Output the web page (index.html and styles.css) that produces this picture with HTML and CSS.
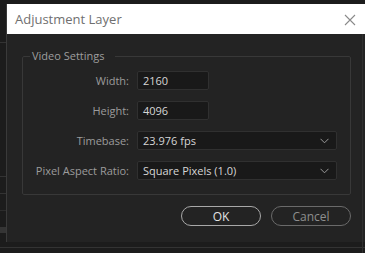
FILE: index.html
```html
<!DOCTYPE html>
<html>
  <head>
    <title>Adjustment Layer</title>
    <link rel="stylesheet" href="styles.css">
  </head>
  <body>
    <div class="screen">
      <div class="side">
        <div class="seg seg-a"></div>
        <div class="seg seg-b"></div>
        <div class="seg seg-c"></div>
        <div class="seg seg-d"></div>
        <div class="seg seg-e"></div>
      </div>

      <div class="dialog">
        <div class="titlebar">
          <span class="title">Adjustment Layer</span>
          <svg class="close" width="12" height="12" viewBox="0 0 12 12">
            <path d="M1 1 L11 11 M11 1 L1 11" stroke="#8a8a8a" stroke-width="1.1" fill="none"/>
          </svg>
        </div>

        <div class="body">
          <fieldset class="group">
            <legend class="legend">Video Settings</legend>
            <div class="rows">
              <label class="lbl">Width:</label>
              <div class="field short">2160</div>

              <label class="lbl">Height:</label>
              <div class="field short">4096</div>

              <label class="lbl">Timebase:</label>
              <div class="field long">
                <span>23.976 fps</span>
                <svg class="chev" width="9" height="6" viewBox="0 0 9 6">
                  <path d="M0.5 0.8 L4.5 4.8 L8.5 0.8" stroke="#9a9a9a" stroke-width="1" fill="none"/>
                </svg>
              </div>

              <label class="lbl">Pixel Aspect Ratio:</label>
              <div class="field long">
                <span>Square Pixels (1.0)</span>
                <svg class="chev" width="9" height="6" viewBox="0 0 9 6">
                  <path d="M0.5 0.8 L4.5 4.8 L8.5 0.8" stroke="#9a9a9a" stroke-width="1" fill="none"/>
                </svg>
              </div>
            </div>
          </fieldset>

          <div class="buttons">
            <button class="btn ok">OK</button>
            <button class="btn cancel">Cancel</button>
          </div>
        </div>
      </div>
    </div>
    <div class="bottom-line"></div>
  </body>
</html>
```

FILE: styles.css
```css
body{
  margin: 0;
  background-color: #1c1c1c;
  font-family: "Open Sans", "Noto Sans", sans-serif;
  overflow: hidden;
  width: 365px;
  height: 253px;
}

.screen{
  display: flex;
  padding-top: 4px;
}

.side{
  width: 6px;
  display: flex;
  flex-direction: column;
  padding-top: 38px;
}

.seg{
  border-top: 1px solid #333;
}
.seg-a{ height: 133px; }
.seg-b{ height: 16px; }
.seg-c{ height: 16px; }
.seg-d{ height: 16px; border-top-color: #2c2c2c; }
.seg-e{ height: 6px; background-color: #353535; border-top: none; }

.dialog{
  width: 358px;
  height: 238px;
  border-left: 1px solid #3a3a3a;
  background-color: #232323;
}

.titlebar{
  height: 30px;
  background-color: #ffffff;
  display: flex;
  align-items: center;
  justify-content: space-between;
  padding: 0 9px 0 8px;
}

.title{
  color: #6f6f6f;
  font-size: 13px;
}

.close{
  margin-top: 1px;
}

.body{
  height: 207px;
  border-right: 1px solid #2f2f2f;
  border-bottom: 1px solid #3d3d3d;
  margin-right: 2px;
  padding: 15px 0 0 15px;
}

.group{
  margin: 0;
  padding: 8px 0 14px 0;
  width: 327px;
  border: 1px solid #383838;
  border-radius: 2px;
}

.legend{
  margin-left: 7px;
  padding: 0 10px 0 2px;
  color: #9e9e9e;
  font-size: 11px;
  line-height: 14px;
}

.rows{
  display: grid;
  grid-template-columns: 106px auto;
  column-gap: 8px;
  row-gap: 11px;
  align-items: center;
}

.lbl{
  text-align: right;
  color: #9c9c9c;
  font-size: 11px;
}

.field{
  height: 17px;
  border: 1px solid #303030;
  border-radius: 2px;
  background-color: #191919;
  color: #d6d6d6;
  font-size: 11px;
  display: flex;
  align-items: center;
  justify-content: space-between;
  padding: 0 7px 0 5px;
}

.short{
  width: 58px;
}

.long{
  width: 186px;
}

.buttons{
  display: flex;
  justify-content: flex-end;
  gap: 10px;
  width: 329px;
  margin-top: 11px;
}

.btn{
  width: 80px;
  height: 20px;
  border-radius: 10px;
  background-color: transparent;
  font-family: "Open Sans", "Noto Sans", sans-serif;
  font-size: 12px;
  padding: 0;
}

.ok{
  border: 1px solid #a8a8a8;
  color: #e2e2e2;
}

.cancel{
  border: 1px solid #6a6a6a;
  color: #8e8e8e;
}

.bottom-line{
  margin-top: 5px;
  border-top: 1px solid #333;
}
```
